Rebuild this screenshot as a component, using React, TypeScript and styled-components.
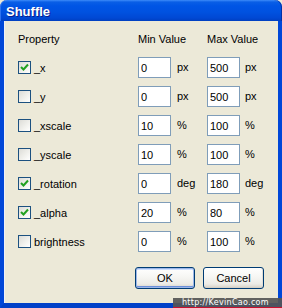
import React from "react";
import styled, { createGlobalStyle } from "styled-components";

const Global = createGlobalStyle`
  html, body { margin: 0; padding: 0; background: #ece9d8; }
  body { font-family: "Liberation Sans", Arial, sans-serif; font-size: 11px; color: #000; }
  * { box-sizing: border-box; }
`;

const Window = styled.div`
  position: relative;
  width: 282px;
  height: 308px;
  display: flex;
  flex-direction: column;
  overflow: hidden;
`;

const TitleBar = styled.div`
  height: 21px;
  flex: 0 0 21px;
  border-radius: 7px 7px 0 0;
  background: linear-gradient(
    to bottom,
    #3d8cf9 0px,
    #0a5fe6 2px,
    #0055e5 6px,
    #0052e0 12px,
    #0048d4 18px,
    #003fc0 21px
  );
  box-shadow: inset 1px 0 0 #2f73ee, inset -1px 0 0 #0031a8;
  display: flex;
  align-items: center;
  padding-left: 6px;
`;

const Title = styled.span`
  font-family: "Liberation Sans", Arial, sans-serif;
  font-weight: bold;
  font-size: 13px;
  color: #fff;
  text-shadow: 1px 1px 0 #0a1e8c;
  margin-top: 1px;
`;

const Body = styled.div`
  flex: 1;
  background: #ece9d8;
  border-left: 4px solid #0047d8;
  border-right: 4px solid #0047d8;
  border-bottom: 5px solid #0040c8;
  box-shadow: inset 1px 0 0 #eef0f8;
  display: flex;
  flex-direction: column;
  padding: 7px 14px 0 14px;
`;

const Grid = styled.div`
  display: grid;
  grid-template-columns: 120px 33px 36px 33px 1fr;
  grid-auto-rows: 21px;
  row-gap: 8px;
`;

const HeaderCell = styled.div<{ $span?: number }>`
  grid-column: span ${(p) => p.$span ?? 1};
  align-self: end;
  line-height: 13px;
  white-space: nowrap;
  margin-bottom: 3px;
`;

const PropCell = styled.label`
  display: flex;
  align-items: center;
  gap: 3px;
`;

const Box = styled.span<{ $checked?: boolean }>`
  width: 13px;
  height: 13px;
  border: 1px solid #1c5180;
  background: linear-gradient(135deg, #dcdcd7 0%, #f2f2ee 60%, #ffffff 100%);
  display: flex;
  align-items: center;
  justify-content: center;
`;

const Field = styled.input`
  width: 33px;
  height: 21px;
  border: 1px solid #7f9db9;
  background: #fff;
  font-family: "Liberation Sans", Arial, sans-serif;
  font-size: 11px;
  padding: 0 0 0 2px;
  margin: 0;
  outline: none;
  color: #000;
`;

const Unit = styled.div<{ $pad: number }>`
  display: flex;
  align-items: center;
  padding-left: ${(p) => p.$pad}px;
  line-height: 13px;
`;

const Buttons = styled.div`
  display: flex;
  justify-content: flex-end;
  gap: 8px;
  margin-top: 15px;
`;

const Button = styled.button<{ $w: number }>`
  width: ${(p) => p.$w}px;
  height: 22px;
  border: 1px solid #003c74;
  border-radius: 3px;
  background: linear-gradient(to bottom, #ffffff 0%, #f6f6f3 45%, #ecebe6 80%, #d6d0c5 100%);
  box-shadow: inset 0 -1px 0 #d6d0c5, inset -1px 0 0 #e3ded4;
  font-family: "Liberation Sans", Arial, sans-serif;
  font-size: 11px;
  color: #000;
  padding: 0;
  margin: 0;
`;

const Primary = styled(Button)`
  box-shadow: inset 0 0 0 1px #9cb6e8, inset 0 -2px 0 #6c8fd9, inset 0 2px 0 #cfe0ff;
`;

const Watermark = styled.div`
  position: absolute;
  right: 0;
  bottom: 0;
  width: 109px;
  height: 10px;
  background: rgba(85, 85, 85, 0.92);
  color: #fff;
  font-family: "DejaVu Sans", Verdana, sans-serif;
  font-size: 8px;
  line-height: 9px;
  padding-left: 9px;
  border-bottom: 1px solid #c8102e;
  letter-spacing: 0.3px;
  white-space: nowrap;
`;

const Check = () => (
  <svg width="9" height="9" viewBox="0 0 9 9">
    <path d="M1 4 L3.5 6.5 L8 1.5" fill="none" stroke="#21a121" strokeWidth="2" />
  </svg>
);

type Row = { name: string; checked: boolean; min: string; max: string; unit: string };

const rows: Row[] = [
  { name: "_x", checked: true, min: "0", max: "500", unit: "px" },
  { name: "_y", checked: false, min: "0", max: "500", unit: "px" },
  { name: "_xscale", checked: false, min: "10", max: "100", unit: "%" },
  { name: "_yscale", checked: false, min: "10", max: "100", unit: "%" },
  { name: "_rotation", checked: true, min: "0", max: "180", unit: "deg" },
  { name: "_alpha", checked: true, min: "20", max: "80", unit: "%" },
  { name: "brightness", checked: false, min: "0", max: "100", unit: "%" },
];

export default function App() {
  return (
    <>
      <Global />
      <Window>
        <TitleBar>
          <Title>Shuffle</Title>
        </TitleBar>
        <Body>
          <Grid>
            <HeaderCell>Property</HeaderCell>
            <HeaderCell $span={2}>Min Value</HeaderCell>
            <HeaderCell $span={2}>Max Value</HeaderCell>
            {rows.map((r) => (
              <React.Fragment key={r.name}>
                <PropCell>
                  <Box $checked={r.checked}>{r.checked && <Check />}</Box>
                  <span>{r.name}</span>
                </PropCell>
                <Field defaultValue={r.min} />
                <Unit $pad={6}>{r.unit}</Unit>
                <Field defaultValue={r.max} />
                <Unit $pad={5}>{r.unit}</Unit>
              </React.Fragment>
            ))}
          </Grid>
          <Buttons>
            <Primary $w={60}>OK</Primary>
            <Button $w={61}>Cancel</Button>
          </Buttons>
        </Body>
        <Watermark>http://KevinCao.com</Watermark>
      </Window>
    </>
  );
}
